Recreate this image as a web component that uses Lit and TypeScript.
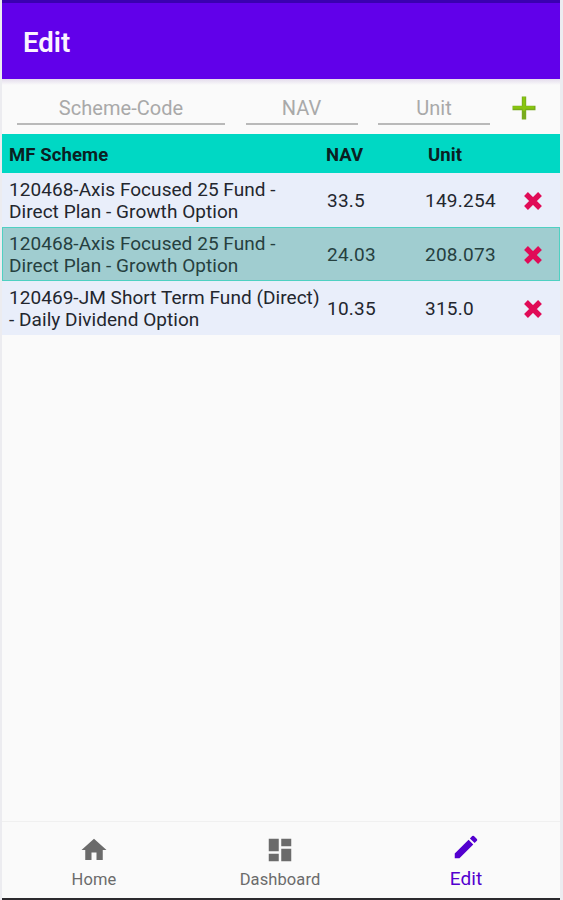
import { LitElement, html, css, svg } from "lit";
import { customElement } from "lit/decorators.js";
import { classMap } from "lit/directives/class-map.js";

interface Holding {
  scheme: string[];
  nav: string;
  unit: string;
  selected?: boolean;
}

const HOLDINGS: Holding[] = [
  { scheme: ["120468-Axis Focused 25 Fund -", "Direct Plan - Growth Option"], nav: "33.5", unit: "149.254" },
  { scheme: ["120468-Axis Focused 25 Fund -", "Direct Plan - Growth Option"], nav: "24.03", unit: "208.073", selected: true },
  { scheme: ["120469-JM Short Term Fund (Direct)", "- Daily Dividend Option"], nav: "10.35", unit: "315.0" },
];

const TABS = [
  { label: "Home", shape: svg`<path d="M10 20v-6h4v6h5v-8h3L12 3 2 12h3v8z"/>` },
  { label: "Dashboard", shape: svg`<path d="M3 13h8V3H3v10zm0 8h8v-6H3v6zm10 0h8V11h-8v10zm0-18v6h8V3h-8z"/>` },
  {
    label: "Edit",
    active: true,
    shape: svg`<path d="M3 17.25V21h3.75L17.81 9.94l-3.75-3.75L3 17.25zM20.71 7.04a1 1 0 0 0 0-1.41l-2.34-2.34a1 1 0 0 0-1.41 0l-1.83 1.83 3.75 3.75 1.83-1.83z"/>`,
  },
];

@customElement("app-root")
export class AppRoot extends LitElement {
  static styles = css`
    :host {
      display: flex;
      flex-direction: column;
      box-sizing: border-box;
      height: 900px;
      padding: 0 3px 0 2px;
      background: #ececf0;
      font-family: Roboto, sans-serif;
      color: #23262e;
      overflow: hidden;
    }
    .status { height: 3px; flex: none; background: #3a00b0; }
    .bar {
      height: 76px;
      flex: none;
      box-sizing: border-box;
      padding: 3px 0 0 21px;
      display: flex;
      align-items: center;
      background: #6100ea;
      color: #fbf3ff;
      font-size: 27.5px;
      font-weight: 600;
    }
    .body { flex: 1; background: #fafafa; }
    .form {
      height: 55px;
      box-sizing: border-box;
      padding: 11px 0 0 15px;
      display: grid;
      grid-template-columns: 208px 112px 112px 1fr;
      column-gap: 20.5px;
      background: linear-gradient(#e4dcec, #fafafa 6px);
    }
    .field {
      height: 33px;
      border-bottom: 2px solid #b9b9b9;
      line-height: 37px;
      text-align: center;
      font-size: 20px;
      letter-spacing: 0.05px;
      color: #a9a9a9;
    }
    .add { width: 24px; height: 24px; margin: 6px 0 0 1px; }
    .row {
      height: 54px;
      box-sizing: border-box;
      display: grid;
      grid-template-columns: 318px 98px 92px 1fr;
      align-items: center;
      background: #e9eefa;
      padding-left: 7px;
      font-size: 19px;
      line-height: 22px;
      letter-spacing: 0.25px;
      white-space: nowrap;
    }
    .scheme { letter-spacing: 0.05px; padding-top: 2px; }
    .row.head {
      height: 39px;
      grid-template-columns: 317px 102px 1fr;
      background: #00d8c4;
      font-weight: 700;
      font-size: 18.5px;
      letter-spacing: 0.1px;
      color: #0a2022;
      padding-top: 3px;
    }
    .row.selected {
      background: #a0cdd0;
      box-shadow: inset 0 0 0 1px #4fd0c2;
      color: #26403f;
    }
    .figure { padding-top: 2px; }
    .remove { width: 20px; height: 20px; display: block; margin: 1px 0 0 6px; }
    .nav {
      height: 76px;
      flex: none;
      display: grid;
      grid-template-columns: repeat(3, 1fr);
      background: #fafafa;
      border-top: 1px solid #f0f0f0;
      color: #6b6b6b;
    }
    .tab {
      display: flex;
      flex-direction: column;
      align-items: center;
      padding: 13px 2px 0 0;
      font-size: 16.5px;
      line-height: 20px;
      letter-spacing: 0.1px;
    }
    .tab svg { width: 30px; height: 30px; fill: currentColor; margin-bottom: 5px; }
    .tab.active { padding-top: 10px; color: #5300cf; font-size: 19px; }
    .tab.active svg { margin-bottom: 7px; }
    .base { height: 2px; flex: none; background: #2c2a2e; }
  `;

  render() {
    return html`
      <div class="status"></div>
      <div class="bar"><span>Edit</span></div>
      <div class="body">
        <div class="form">
          <div class="field">Scheme-Code</div>
          <div class="field">NAV</div>
          <div class="field">Unit</div>
          <svg class="add" viewBox="0 0 24 24">
            <path d="M12 0.5v23M0.5 12h23" stroke="#78ab1c" stroke-width="4.4" />
            <path d="M12 1v14M1 11.5h21" stroke="#88c60e" stroke-width="2.6" />
          </svg>
        </div>
        <div class="row head"><span>MF Scheme</span><span>NAV</span><span>Unit</span></div>
        ${HOLDINGS.map(
          (h) => html`
            <div class=${classMap({ row: true, selected: !!h.selected })}>
              <span class="scheme">${h.scheme[0]}<br />${h.scheme[1]}</span>
              <span class="figure">${h.nav}</span>
              <span class="figure">${h.unit}</span>
              <svg class="remove" viewBox="0 0 20 20">
                <path d="M3 3l14 14M17 3L3 17" stroke="#e00b57" stroke-width="5.4" />
              </svg>
            </div>
          `
        )}
      </div>
      <div class="nav">
        ${TABS.map(
          (t) => html`
            <div class=${classMap({ tab: true, active: !!t.active })}>
              <svg viewBox="0 0 24 24">${t.shape}</svg>
              <span>${t.label}</span>
            </div>
          `
        )}
      </div>
      <div class="base"></div>
    `;
  }
}
